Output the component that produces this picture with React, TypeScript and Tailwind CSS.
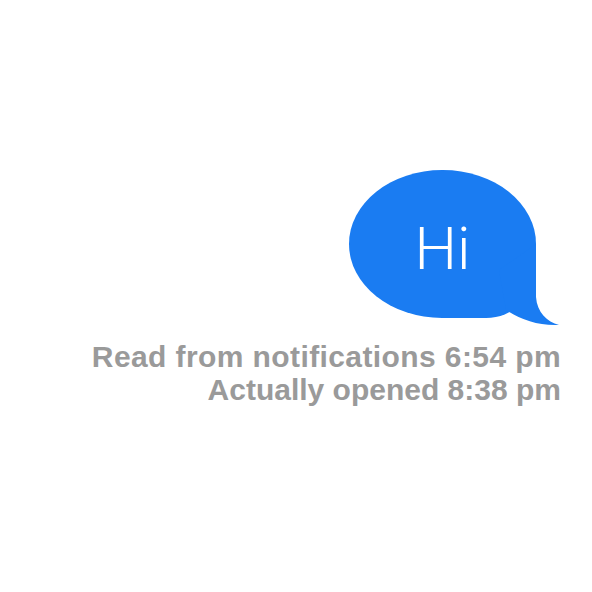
import React from 'react';

const BLUE = '#1a7cf2';

export default function App() {
  return (
    <div className="w-[592px] h-[592px] bg-white flex flex-col items-end pt-[170px] pr-[31px]">
      {/* Message bubble */}
      <div className="relative w-[212px] h-[158px]">
        <div className="relative w-[187px] h-[148px] rounded-tl-[93px_74px] rounded-tr-[93px_74px] rounded-bl-[93px_74px] rounded-br-[50px] bg-[#1a7cf2] flex items-center justify-center">
          <span
            className="text-white text-[60px] font-light leading-none pt-[10px]"
            style={{ fontFamily: 'Roboto, "Liberation Sans", sans-serif' }}
          >
            Hi
          </span>
        </div>
        {/* tail */}
        <svg className="absolute inset-0" width="212" height="158" viewBox="0 0 212 158">
          <path d="M187 74 L187 127 C188 142 198 152 210 155 C190 156 172 150 157 140 L150 100 Z" fill={BLUE} />
        </svg>
      </div>

      {/* Read receipt */}
      <div
        className="mt-[12px] flex flex-col items-end text-[#9a9a9a] font-bold text-[30px] leading-[33px]"
        style={{ fontFamily: '"Liberation Sans", Arial, sans-serif' }}
      >
        <span className="tracking-[0.4px]">Read from notifications 6:54 pm</span>
        <span>Actually opened 8:38 pm</span>
      </div>
    </div>
  );
}
